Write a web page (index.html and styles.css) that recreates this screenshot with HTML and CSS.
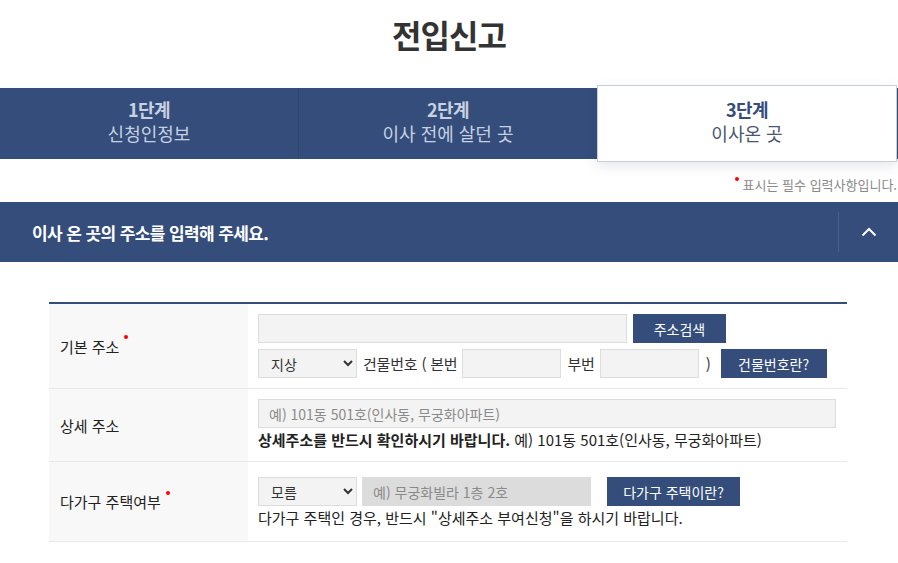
FILE: index.html
```html
<!DOCTYPE html>
<html lang="ko">
<head>
  <meta charset="UTF-8">
  <meta name="viewport" content="width=device-width, initial-scale=1.0">
  <title>전입신고</title>
  <link rel="stylesheet" href="styles.css">
</head>
<body>
  <div class="container">
    <h1>전입신고</h1>

    <div class="steps">
      <div class="step">
        <strong>1단계</strong>
        <span>신청인정보</span>
      </div>
      <div class="step">
        <strong>2단계</strong>
        <span>이사 전에 살던 곳</span>
      </div>
      <div class="step active">
        <strong>3단계</strong>
        <span>이사온 곳</span>
      </div>
    </div>

    <p class="required-note"><i class="dot"></i>표시는 필수 입력사항입니다.</p>

    <div class="section-head">
      <h2>이사 온 곳의 주소를 입력해 주세요.</h2>
      <button class="toggle" aria-label="접기">
        <svg width="16" height="10" viewBox="0 0 16 10"><path d="M1.5 8.5 L8 2 L14.5 8.5" fill="none" stroke="#fff" stroke-width="2"/></svg>
      </button>
    </div>

    <div class="form-table">
      <div class="row row-basic">
        <div class="label">기본 주소<i class="dot"></i></div>
        <div class="field">
          <div class="line">
            <input type="text" class="input addr">
            <button class="btn">주소검색</button>
          </div>
          <div class="line">
            <select class="select"><option>지상</option></select>
            <span class="txt">건물번호 ( 본번</span>
            <input type="text" class="input num">
            <span class="txt">부번</span>
            <input type="text" class="input num">
            <span class="txt paren">)</span>
            <button class="btn btn-wide">건물번호란?</button>
          </div>
        </div>
      </div>

      <div class="row row-detail">
        <div class="label">상세 주소</div>
        <div class="field">
          <input type="text" class="input detail" placeholder="예) 101동 501호(인사동, 무궁화아파트)">
          <p class="help"><b>상세주소를 반드시 확인하시기 바랍니다.</b> 예) 101동 501호(인사동, 무궁화아파트)</p>
        </div>
      </div>

      <div class="row row-multi">
        <div class="label">다가구 주택여부<i class="dot"></i></div>
        <div class="field">
          <div class="line">
            <select class="select"><option>모름</option></select>
            <input type="text" class="input disabled" placeholder="예) 무궁화빌라 1층 2호" disabled>
            <button class="btn btn-multi">다가구 주택이란?</button>
          </div>
          <p class="help">다가구 주택인 경우, 반드시 "상세주소 부여신청"을 하시기 바랍니다.</p>
        </div>
      </div>
    </div>
  </div>
</body>
</html>
```

FILE: styles.css
```css
html, body {
  overflow-x: hidden;
}

body {
  margin: 0;
  font-family: "Noto Sans CJK KR", "Noto Sans", sans-serif;
  color: #333;
  background: #fff;
}

.container {
  width: 898px;
}

h1 {
  margin: 0;
  padding-top: 12px;
  height: 76px;
  box-sizing: border-box;
  text-align: center;
  font-size: 32px;
  line-height: 44px;
  font-weight: 700;
  color: #333;
  letter-spacing: -1px;
}

/* steps */
.steps {
  display: flex;
  height: 71px;
  margin-top: 12px;
  background: #344d7a;
}

.step {
  flex: 1;
  display: flex;
  flex-direction: column;
  align-items: center;
  justify-content: center;
  padding-bottom: 5px;
  color: #c8d1e2;
  border-left: 1px solid #2d4470;
}

.step:first-child {
  border-left: none;
}

.step strong {
  font-size: 18px;
  line-height: 24px;
  letter-spacing: -0.5px;
}

.step span {
  font-size: 18px;
  line-height: 24px;
  font-weight: 400;
}

.step.active {
  background: #fff;
  color: #344d7a;
  margin: -3px 1px -3px 0;
  border: 1px solid #c9ced9;
  box-shadow: 0 4px 12px rgba(40, 60, 100, 0.12);
}

.step.active span {
  color: #4a5670;
}

/* required note */
.required-note {
  margin: 0 1px 0 0;
  height: 43px;
  padding-top: 16px;
  box-sizing: border-box;
  text-align: right;
  font-size: 13px;
  line-height: 20px;
  color: #888;
}

.dot {
  display: inline-block;
  width: 4px;
  height: 4px;
  border-radius: 50%;
  background: #f00;
  vertical-align: top;
  margin: 2px 4px 0 0;
}

/* section header */
.section-head {
  display: flex;
  align-items: center;
  height: 60px;
  background: #344d7a;
}

.section-head h2 {
  flex: 1;
  margin: 0;
  padding-left: 32px;
  font-size: 17px;
  font-weight: 700;
  color: #fff;
  letter-spacing: -0.6px;
}

.toggle {
  width: 60px;
  height: 40px;
  background: none;
  border: none;
  border-left: 1px solid rgba(255, 255, 255, 0.12);
  display: flex;
  align-items: center;
  justify-content: center;
  padding: 0;
}

/* form table */
.form-table {
  margin: 40px 51px 0 49px;
  border-top: 2px solid #344d7a;
}

.row {
  display: grid;
  grid-template-columns: 199px 1fr;
  border-bottom: 1px solid #e8e8e8;
}

.label {
  display: flex;
  align-items: center;
  padding-left: 11px;
  background: #f8f8f8;
  font-size: 15px;
  color: #222;
}

.label .dot {
  align-self: center;
  margin: -18px 0 0 5px;
}

.field {
  padding: 10px;
}

.row-multi .field {
  padding: 15px 10px 12px;
}

.line {
  display: flex;
  align-items: center;
  gap: 6px;
}

.line + .line {
  margin-top: 6px;
}

.input,
.select {
  height: 29px;
  box-sizing: border-box;
  border: 1px solid #dcdcdc;
  background: #f3f3f3;
  font-family: inherit;
  font-size: 14px;
  color: #333;
  padding: 0 10px;
  margin: 0;
}

.input::placeholder {
  color: #8a8a8a;
}

.addr {
  width: 369px;
}

.num {
  width: 99px;
}

.detail {
  width: 578px;
  display: block;
}

.select {
  width: 99px;
  padding-left: 8px;
}

.disabled {
  width: 229px;
  margin-left: -1px;
  background: #dcdcdc;
  border-color: #dcdcdc;
}

.txt {
  font-size: 15px;
  color: #333;
  margin-right: -1px;
  letter-spacing: -0.2px;
}

.paren {
  margin: 0 4px 0 1px;
}

.btn {
  height: 29px;
  padding: 0;
  width: 93px;
  border: none;
  background: #344d7a;
  color: #fff;
  font-family: inherit;
  font-size: 14px;
}

.btn-wide {
  width: 106px;
}

.btn-multi {
  width: 133px;
  margin-left: 10px;
}

.help {
  margin: 0;
  font-size: 15px;
  line-height: 23px;
  color: #222;
}
```
